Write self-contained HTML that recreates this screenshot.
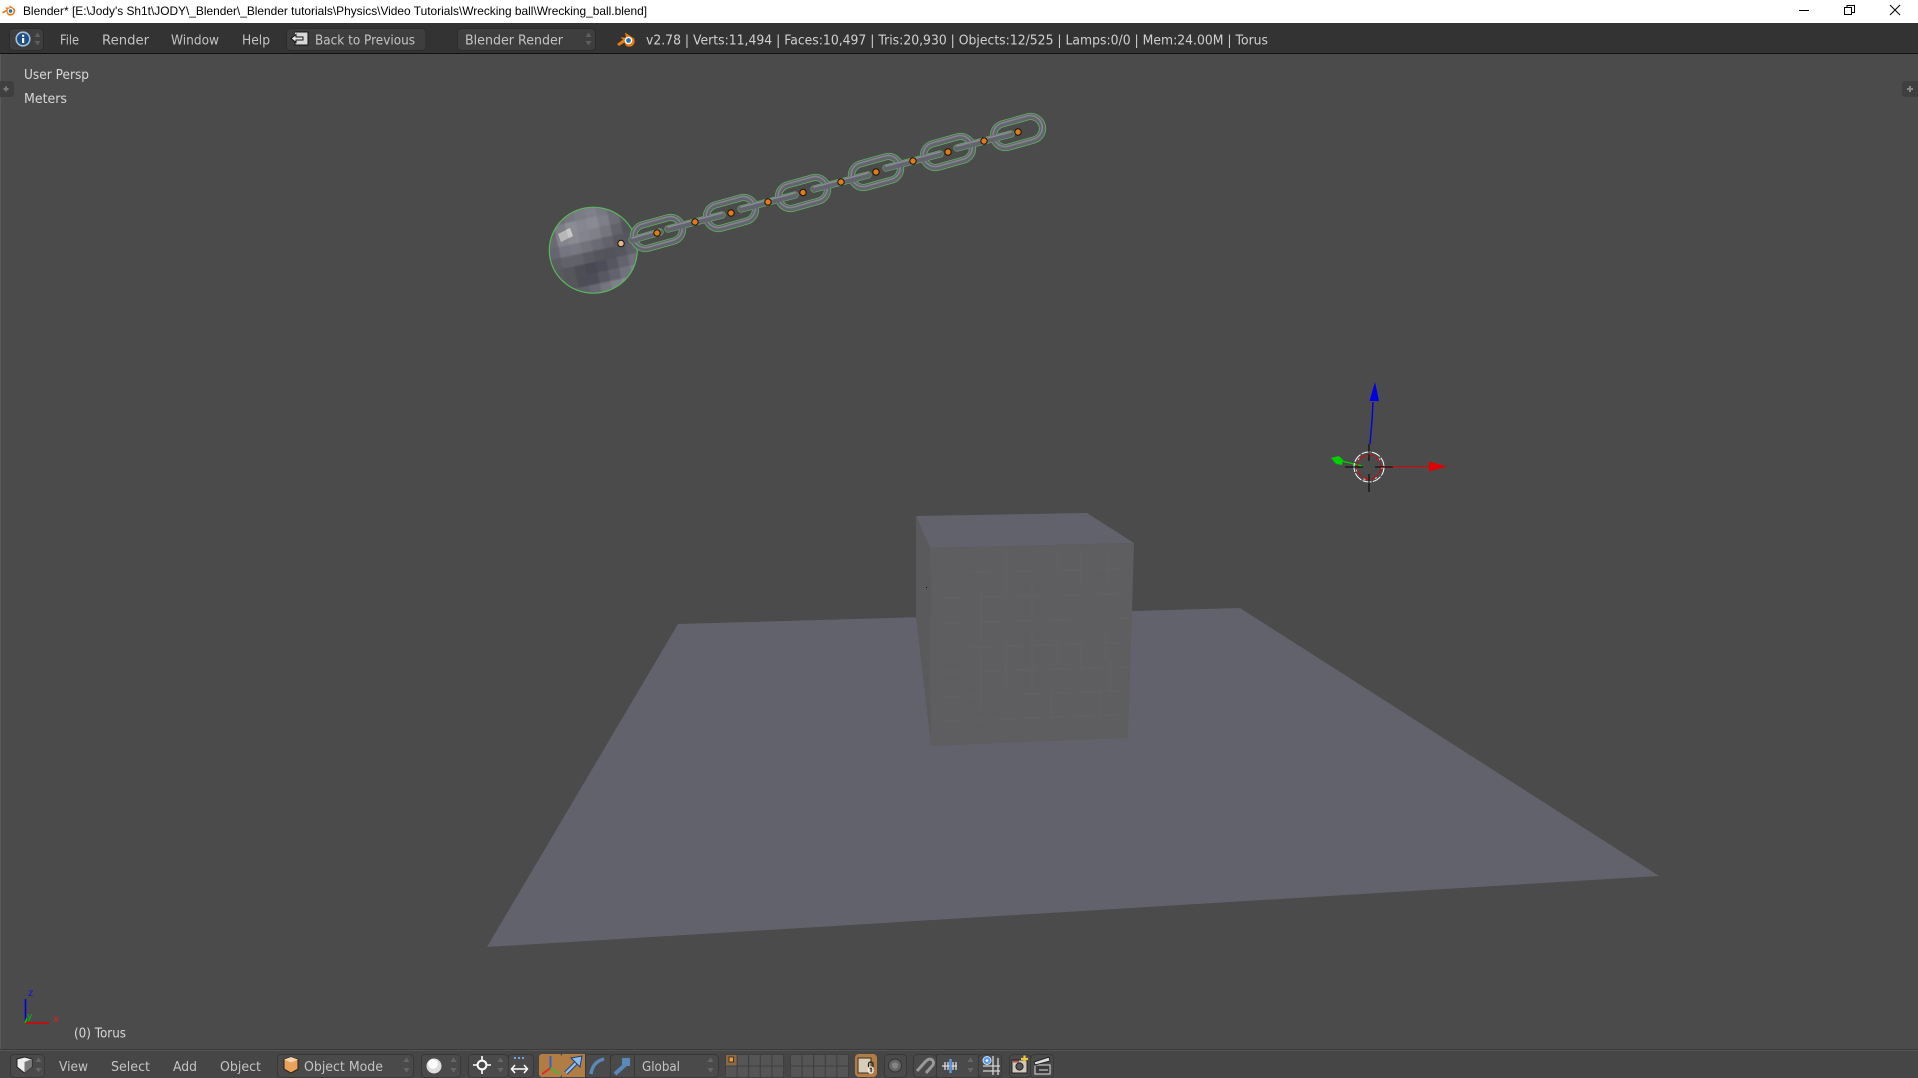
<!DOCTYPE html>
<html><head><meta charset="utf-8"><title>Blender</title>
<style>
html,body{margin:0;padding:0;background:#4b4b4b;overflow:hidden}
svg{display:block}
.u{font-family:"DejaVu Sans",sans-serif;font-size:13px;fill:#c4c4c4}
.v{font-family:"DejaVu Sans",sans-serif;font-size:13px;fill:#d8d8d8}
</style></head><body>
<svg xmlns="http://www.w3.org/2000/svg" width="1918" height="1078" viewBox="0 0 1918 1078">
<defs>
<clipPath id="ballc"><ellipse cx="593.3" cy="250.2" rx="44" ry="43"/></clipPath>
<filter id="soft" x="-10%" y="-10%" width="120%" height="120%"><feGaussianBlur stdDeviation="0.7"/></filter>
</defs>
<!-- viewport -->
<rect width="1918" height="1078" fill="#4b4b4b"/>
<rect x="0" y="54" width="1" height="996" fill="#5a5a5a"/>
<!-- plane -->
<polygon points="487,947 678,624 1240,608 1659,876" fill="#62626c"/>
<!-- cube -->
<polygon points="916,516 1087,513 1134,543 930,548" fill="#62626c"/>
<polygon points="930,548 1134,543 1132,610 1128,738 931,746" fill="#5e5e60"/>
<polygon points="916,516 930,548 931,746 916,617" fill="#5a5a5c"/>
<g stroke="#6a6a70" stroke-width="1" fill="none" opacity=".28">
<path d="M971,572h20M1014,571h22M1060,570h20M1100,569h20M941,598h20M981,597h20M1018,596h22M1060,595h20M1098,594h20M1118,618h14M943,623h20M980,622h20M1015,621h20M1050,620h20M970,647h22M1002,646h20M1034,645h20M1066,644h20M1100,643h20M924,672h10M940,672h20M985,671h16M1016,670h20M1050,669h20M1082,668h20M1120,667h14M943,697h20M968,696h20M1020,694h20M1050,693h20M1080,692h20M1100,691h20M943,721h20M970,720h20M995,719h20M1020,718h20M1046,717h20M1074,716h20M1098,715h20"/>
<path d="M1006,548v50M1032,578v40M1058,550v30M1081,552v30M1108,553v30M981,590v50M1032,630v60M1058,640v30M1081,640v30M1106,630v30M981,650v60M1006,640v50M1051,690v30M1100,690v30M1110,660v40"/>
</g>
<rect x="926" y="587" width="1" height="1" fill="#000"/>

<!-- ball -->
<g clip-path="url(#ballc)"><g transform="rotate(-12 593 251)"><g filter="url(#soft)">
<rect x="535" y="193" width="116" height="116" fill="#606068"/>
<rect x="549" y="207" width="11" height="11" fill="#64646c"/><rect x="560" y="207" width="11" height="11" fill="#6c6c74"/><rect x="571" y="207" width="11" height="11" fill="#74747e"/><rect x="582" y="207" width="11" height="11" fill="#7c7c86"/><rect x="593" y="207" width="11" height="11" fill="#80808a"/><rect x="604" y="207" width="11" height="11" fill="#787882"/><rect x="615" y="207" width="11" height="11" fill="#6a6a74"/><rect x="626" y="207" width="11" height="11" fill="#5e5e66"/>
<rect x="549" y="218" width="11" height="11" fill="#68686f"/><rect x="560" y="218" width="11" height="11" fill="#7e7e86"/><rect x="571" y="218" width="11" height="11" fill="#8c8c94"/><rect x="582" y="218" width="11" height="11" fill="#868690"/><rect x="593" y="218" width="11" height="11" fill="#8a8a94"/><rect x="604" y="218" width="11" height="11" fill="#7e7e88"/><rect x="615" y="218" width="11" height="11" fill="#6c6c76"/><rect x="626" y="218" width="11" height="11" fill="#585862"/>
<rect x="549" y="229" width="11" height="11" fill="#6a6a72"/><rect x="560" y="229" width="11" height="11" fill="#84848c"/><rect x="571" y="229" width="11" height="11" fill="#8a8a92"/><rect x="582" y="229" width="11" height="11" fill="#84848e"/><rect x="593" y="229" width="11" height="11" fill="#80808a"/><rect x="604" y="229" width="11" height="11" fill="#74747e"/><rect x="615" y="229" width="11" height="11" fill="#62626c"/><rect x="626" y="229" width="11" height="11" fill="#52525a"/>
<rect x="549" y="240" width="11" height="11" fill="#666670"/><rect x="560" y="240" width="11" height="11" fill="#767680"/><rect x="571" y="240" width="11" height="11" fill="#787882"/><rect x="582" y="240" width="11" height="11" fill="#72727c"/><rect x="593" y="240" width="11" height="11" fill="#6a6a74"/><rect x="604" y="240" width="11" height="11" fill="#62626c"/><rect x="615" y="240" width="11" height="11" fill="#585862"/><rect x="626" y="240" width="11" height="11" fill="#56565e"/>
<rect x="549" y="251" width="11" height="11" fill="#5c5c64"/><rect x="560" y="251" width="11" height="11" fill="#62626a"/><rect x="571" y="251" width="11" height="11" fill="#62626a"/><rect x="582" y="251" width="11" height="11" fill="#5a5a62"/><rect x="593" y="251" width="11" height="11" fill="#54545c"/><rect x="604" y="251" width="11" height="11" fill="#52525c"/><rect x="615" y="251" width="11" height="11" fill="#565660"/><rect x="626" y="251" width="11" height="11" fill="#5e5e68"/>
<rect x="549" y="262" width="11" height="11" fill="#58585f"/><rect x="560" y="262" width="11" height="11" fill="#54545b"/><rect x="571" y="262" width="11" height="11" fill="#4e4e54"/><rect x="582" y="262" width="11" height="11" fill="#4a4a52"/><rect x="593" y="262" width="11" height="11" fill="#4e4e58"/><rect x="604" y="262" width="11" height="11" fill="#565660"/><rect x="615" y="262" width="11" height="11" fill="#64646e"/><rect x="626" y="262" width="11" height="11" fill="#70707c"/>
<rect x="549" y="273" width="11" height="11" fill="#5a5a64"/><rect x="560" y="273" width="11" height="11" fill="#54545a"/><rect x="571" y="273" width="11" height="11" fill="#4e4e56"/><rect x="582" y="273" width="11" height="11" fill="#4e4e58"/><rect x="593" y="273" width="11" height="11" fill="#585862"/><rect x="604" y="273" width="11" height="11" fill="#646470"/><rect x="615" y="273" width="11" height="11" fill="#72727e"/><rect x="626" y="273" width="11" height="11" fill="#7e7e8c"/>
<rect x="549" y="284" width="11" height="11" fill="#66666e"/><rect x="560" y="284" width="11" height="11" fill="#62626a"/><rect x="571" y="284" width="11" height="11" fill="#60606a"/><rect x="582" y="284" width="11" height="11" fill="#686874"/><rect x="593" y="284" width="11" height="11" fill="#74747f"/><rect x="604" y="284" width="11" height="11" fill="#80808d"/><rect x="615" y="284" width="11" height="11" fill="#8a8a98"/><rect x="626" y="284" width="11" height="11" fill="#8a8a98"/>
</g></g>
<polygon points="558,234 570,228 573,236 561,242" fill="#b8b8b8"/>
<polygon points="566,230 570,228 573,236 569,238" fill="#c8c8c8"/>
</g>
<ellipse cx="593.3" cy="250.2" rx="44" ry="43" fill="none" stroke="#58b858" stroke-width="1.2"/>

<!-- chain: outline layer -->
<g fill="none" stroke="#5cb45c" stroke-width="7.2" stroke-linecap="round">
<rect x="633" y="221" width="50" height="24" rx="12" transform="rotate(-15.7 658 233)"/>
<rect x="706" y="201" width="50" height="24" rx="12" transform="rotate(-15.7 731 213)"/>
<rect x="778" y="181" width="50" height="24" rx="12" transform="rotate(-15.7 803 193)"/>
<rect x="851" y="160" width="50" height="24" rx="12" transform="rotate(-15.7 876 172)"/>
<rect x="923" y="140" width="50" height="24" rx="12" transform="rotate(-15.7 948 152)"/>
<rect x="993" y="120" width="50" height="24" rx="12" transform="rotate(-15.7 1018 132)"/>
<path d="M632,240L660,232M668,229L722,215M741,209L795,195M814,189L868,175M886,168L940,154M957,148L1011,134"/>
</g>
<!-- chain: body -->
<g fill="none" stroke="#64646e" stroke-width="5.6" stroke-linecap="round">
<rect x="633" y="221" width="50" height="24" rx="12" transform="rotate(-15.7 658 233)"/>
<rect x="706" y="201" width="50" height="24" rx="12" transform="rotate(-15.7 731 213)"/>
<rect x="778" y="181" width="50" height="24" rx="12" transform="rotate(-15.7 803 193)"/>
<rect x="851" y="160" width="50" height="24" rx="12" transform="rotate(-15.7 876 172)"/>
<rect x="923" y="140" width="50" height="24" rx="12" transform="rotate(-15.7 948 152)"/>
<rect x="993" y="120" width="50" height="24" rx="12" transform="rotate(-15.7 1018 132)"/>
</g>
<g fill="none" stroke="#84848e" stroke-width="1.6" stroke-linecap="round">
<rect x="633" y="220" width="50" height="24" rx="12" transform="rotate(-15.7 658 233)"/>
<rect x="706" y="200" width="50" height="24" rx="12" transform="rotate(-15.7 731 213)"/>
<rect x="778" y="180" width="50" height="24" rx="12" transform="rotate(-15.7 803 193)"/>
<rect x="851" y="159" width="50" height="24" rx="12" transform="rotate(-15.7 876 172)"/>
<rect x="923" y="139" width="50" height="24" rx="12" transform="rotate(-15.7 948 152)"/>
<rect x="993" y="119" width="50" height="24" rx="12" transform="rotate(-15.7 1018 132)"/>
</g>
<g fill="none" stroke="#646470" stroke-width="6" stroke-linecap="round">
<path d="M632,240L660,232M668,229L722,215M741,209L795,195M814,189L868,175M886,168L940,154M957,148L1011,134"/>
</g>
<g fill="none" stroke="#8a8a94" stroke-width="1.6" stroke-linecap="round">
<path d="M632,238L660,230M668,227L722,213M741,207L795,193M814,187L868,173M886,166L940,152M957,146L1011,132"/>
</g>
<!-- origins -->
<g fill="#e07a1a" stroke="#1a1208" stroke-width="1">
<circle cx="657" cy="233" r="3.2"/><circle cx="695" cy="222" r="3.2"/><circle cx="731" cy="213" r="3.2"/><circle cx="768" cy="202" r="3.2"/><circle cx="803" cy="192.5" r="3.2"/><circle cx="841" cy="182" r="3.2"/><circle cx="876" cy="172" r="3.2"/><circle cx="913" cy="161" r="3.2"/><circle cx="948" cy="152" r="3.2"/><circle cx="984" cy="141" r="3.2"/><circle cx="1018" cy="132" r="3.2"/>
</g>
<circle cx="621" cy="243.5" r="3.2" fill="#e6b78c" stroke="#1a1208" stroke-width="1"/>

<!-- 3D cursor & manipulator -->
<g fill="none">
<path d="M1370,444L1372,420L1373,402" stroke="#0000e0" stroke-width="1.4"/>
<path d="M1362,466L1342,461" stroke="#00d000" stroke-width="1.4"/>
<path d="M1383,466.5H1430" stroke="#e00000" stroke-width="1"/>
</g>
<polygon points="1375,382 1369.5,401 1379,401" fill="#0000e0"/>
<polygon points="1331,458 1339,456 1343,460 1342,465 1336,464" fill="#00d000"/>
<polygon points="1429,461.5 1447,466.5 1429,471.5" fill="#e00000"/>
<circle cx="1369" cy="467" r="15" fill="none" stroke="#fff" stroke-width="1" stroke-dasharray="9 1.5"/>
<circle cx="1369" cy="467" r="12" fill="none" stroke="#e00000" stroke-width="1" stroke-dasharray="7 2"/>
<circle cx="1369" cy="467" r="13" fill="none" stroke="#fff" stroke-width="1" stroke-dasharray="2 10" opacity=".7"/>
<path d="M1345,467H1363M1375,467H1393M1369,444V461M1369,474V492" stroke="#000" stroke-width="1" fill="none" shape-rendering="crispEdges"/>

<!-- viewport text -->
<text class="v" x="24" y="79" textLength="65" lengthAdjust="spacingAndGlyphs">User Persp</text>
<text class="v" x="24" y="103" textLength="43" lengthAdjust="spacingAndGlyphs">Meters</text>
<text class="v" x="74" y="1037.5" textLength="52" lengthAdjust="spacingAndGlyphs">(0) Torus</text>
<!-- corner axes -->
<path d="M25.5,1023V999" stroke="#0000e0" stroke-width="1.6" fill="none"/>
<path d="M25,1023H49" stroke="#e00000" stroke-width="1.6" fill="none"/>
<path d="M25,1023L27,1018" stroke="#00c000" stroke-width="1.6" fill="none"/>
<text x="28" y="996" font-family="DejaVu Sans,sans-serif" font-size="10" fill="#1010e0">z</text>
<text x="27" y="1019" font-family="DejaVu Sans,sans-serif" font-size="9" fill="#00c000">y</text>
<text x="53" y="1022" font-family="DejaVu Sans,sans-serif" font-size="10" fill="#e02020">x</text>
<!-- tool region plus -->
<rect x="-6" y="81" width="20" height="16" rx="3" fill="#3f3f3f"/>
<path d="M6,86.5V91.5M3.5,89H8.5" stroke="#777" stroke-width="2" fill="none"/>
<rect x="1902" y="81" width="24" height="16" rx="3" fill="#3f3f3f"/>
<path d="M1910,86V92M1907,89H1913" stroke="#888" stroke-width="2" fill="none"/>

<!-- title bar -->
<rect width="1918" height="23" fill="#fff"/>
<g>
<path d="M2,12L7,9.5L5,7.5L10,7.5L9,5L15,9C16,13 13,16.5 9,15.5C7,15 6.8,12.5 6.5,11.5L3,13.5Z" fill="#e87d0d"/>
<circle cx="10.5" cy="11" r="3" fill="#fff"/><circle cx="10.5" cy="11" r="1.8" fill="#2a6eb8"/>
</g>
<text x="23" y="15" font-family="Liberation Sans,sans-serif" font-size="12" fill="#000" textLength="624" lengthAdjust="spacingAndGlyphs">Blender* [E:\Jody's Sh1t\JODY\_Blender\_Blender tutorials\Physics\Video Tutorials\Wrecking ball\Wrecking_ball.blend]</text>
<g fill="none" stroke="#000" stroke-width="1" shape-rendering="crispEdges">
<path d="M1799,10.5H1809"/>
<rect x="1844.5" y="7.5" width="7" height="7"/>
<path d="M1847,7.5V5.5H1854.5V12.5H1852"/>
</g>
<path d="M1890,5L1900,15M1900,5L1890,15" stroke="#000" stroke-width="1" fill="none"/>

<!-- top header -->
<rect y="23" width="1918" height="30" fill="#333"/>
<rect y="53" width="1918" height="1" fill="#111"/>
<rect x="9.5" y="28.5" width="34" height="22" rx="4" fill="#3e3e3e" stroke="#2c2c2c"/>
<circle cx="23" cy="39" r="7.6" fill="#a4bedc"/><circle cx="23" cy="39" r="6" fill="#1f4e86"/>
<rect x="22" y="38" width="2.2" height="5" fill="#fff"/><rect x="22" y="34.8" width="2.2" height="2" fill="#fff"/>
<path d="M34.5,37L37.5,32.5L40.5,37ZM34.5,41L37.5,45.5L40.5,41Z" fill="#5e5e5e"/>
<text class="u" x="60" y="44.5" textLength="19" lengthAdjust="spacingAndGlyphs">File</text>
<text class="u" x="102" y="44.5" textLength="47" lengthAdjust="spacingAndGlyphs">Render</text>
<text class="u" x="171" y="44.5" textLength="48" lengthAdjust="spacingAndGlyphs">Window</text>
<text class="u" x="242" y="44.5" textLength="28" lengthAdjust="spacingAndGlyphs">Help</text>
<rect x="286.5" y="28.5" width="139.5" height="22" rx="4" fill="#3e3e3e" stroke="#2c2c2c"/>
<path d="M295,32H308V45H295V42" fill="#d8d8d8" stroke="#111" stroke-width="1"/>
<path d="M291,38.5L296,34.5V37H303V40H296V42.5Z" fill="#e8e8e8" stroke="#111" stroke-width="1"/>
<text class="u" x="315" y="44.5" textLength="100" lengthAdjust="spacingAndGlyphs">Back to Previous</text>
<rect x="457.5" y="28.5" width="138" height="22" rx="4" fill="#3e3e3e" stroke="#2c2c2c"/>
<text class="u" x="465" y="44.5" textLength="98" lengthAdjust="spacingAndGlyphs">Blender Render</text>
<path d="M585.5,37L588.5,32.5L591.5,37ZM585.5,41L588.5,45.5L591.5,41Z" fill="#5e5e5e"/>
<g>
<path d="M617,44L623,39.5L620.5,37.5L626,37.5L625,32.5L634,38.5C636,43 633,47.5 627.5,46.5C625.5,46 625,43.5 624.5,42.5L619,46Z" fill="#e87d0d"/>
<circle cx="628.5" cy="40.5" r="3.8" fill="#fff"/><circle cx="628.5" cy="40.5" r="2.4" fill="#2a6eb8"/>
</g>
<text x="646" y="44.5" font-family="DejaVu Sans,sans-serif" font-size="13" fill="#d0d0d0" textLength="622" lengthAdjust="spacingAndGlyphs">v2.78 | Verts:11,494 | Faces:10,497 | Tris:20,930 | Objects:12/525 | Lamps:0/0 | Mem:24.00M | Torus</text>

<!-- bottom header -->
<rect y="1050" width="1918" height="28" fill="#464646"/>
<rect y="1049" width="1918" height="1" fill="#3a3a3a"/>
<rect y="1050" width="1918" height="1" fill="#555"/>
<g fill="#4a4a4a" stroke="#383838">
<rect x="10.5" y="1054.5" width="34" height="23" rx="4"/>
<rect x="277.5" y="1054.5" width="136" height="23" rx="4"/>
<rect x="421.5" y="1054.5" width="39" height="23" rx="4"/>
<rect x="468.5" y="1054.5" width="40" height="23" rx="4"/>
<rect x="508.5" y="1054.5" width="25" height="23" rx="4"/>
<rect x="610.5" y="1054.5" width="108" height="23" rx="4"/>
<rect x="585.5" y="1054.5" width="25" height="23"/>
<rect x="884.5" y="1054.5" width="22" height="23" rx="4"/>
<rect x="913.5" y="1054.5" width="23" height="23" rx="4"/>
<rect x="936.5" y="1054.5" width="42" height="23"/>
<rect x="978.5" y="1054.5" width="23" height="23" rx="4"/>
<rect x="1009.5" y="1054.5" width="21" height="23" rx="4"/>
<rect x="1030.5" y="1054.5" width="23" height="23" rx="4"/>
</g>
<rect x="634" y="1055" width="1" height="22" fill="#383838"/>
<!-- shield cube -->
<path d="M17,1059L24.5,1057L32,1059V1067L24.5,1073L17,1067Z" fill="#eee" stroke="#222"/>
<path d="M24.5,1062L32,1059V1067L24.5,1073Z" fill="#777"/>
<path d="M35.5,1062L38.5,1057.5L41.5,1062ZM35.5,1068L38.5,1072.5L41.5,1068Z" fill="#666"/>
<text class="u" x="59" y="1071" textLength="29" lengthAdjust="spacingAndGlyphs">View</text>
<text class="u" x="111" y="1071" textLength="39" lengthAdjust="spacingAndGlyphs">Select</text>
<text class="u" x="173" y="1071" textLength="24" lengthAdjust="spacingAndGlyphs">Add</text>
<text class="u" x="220" y="1071" textLength="41" lengthAdjust="spacingAndGlyphs">Object</text>
<!-- object mode cube -->
<path d="M284,1059.5L291,1057L298,1059.5V1069L291,1073L284,1069Z" fill="#e8a25c" stroke="#2a1c0c"/>
<path d="M284,1059.5L291,1057L298,1059.5L291,1062.5Z" fill="#f4d4ac"/>
<text class="u" x="304" y="1071" textLength="79" lengthAdjust="spacingAndGlyphs">Object Mode</text>
<path d="M403.5,1062L406.5,1057.5L409.5,1062ZM403.5,1068L406.5,1072.5L409.5,1068Z" fill="#666"/>
<!-- sphere -->
<circle cx="434" cy="1066" r="7.5" fill="#ddd"/><circle cx="433" cy="1064" r="4.8" fill="#fff"/>
<path d="M450.5,1062L453.5,1057.5L456.5,1062ZM450.5,1068L453.5,1072.5L456.5,1068Z" fill="#666"/>
<!-- pivot -->
<circle cx="482" cy="1065" r="4.4" fill="none" stroke="#fff" stroke-width="2"/>
<path d="M482,1056V1060M482,1070V1074M473,1065H477M487,1065H491" stroke="#fff" stroke-width="1.6" fill="none"/>
<path d="M497.5,1062L500.5,1057.5L503.5,1062ZM497.5,1068L500.5,1072.5L503.5,1068Z" fill="#666"/>
<path d="M514,1058h2M518,1058h2M522,1058h2" stroke="#6fa4e0" stroke-width="2" fill="none"/>
<path d="M512,1069H527M515,1065L511.5,1069L515,1073M524,1065L527.5,1069L524,1073" stroke="#fff" stroke-width="1.5" fill="none"/>
<!-- manipulator -->
<rect x="539" y="1054" width="23" height="23" rx="3" fill="#b27d45"/>
<rect x="562" y="1054" width="23" height="23" fill="#b27d45"/>
<path d="M550.5,1068V1056" stroke="#3260c8" stroke-width="2" fill="none"/>
<path d="M550.5,1068L542,1074" stroke="#d83030" stroke-width="2" fill="none"/>
<path d="M550.5,1068L559,1074" stroke="#50b030" stroke-width="2" fill="none"/>
<path d="M566,1073L578,1061" stroke="#1c3f6e" stroke-width="4.4" fill="none"/>
<path d="M566,1073L578,1061" stroke="#8cbcf0" stroke-width="2.4" fill="none"/>
<polygon points="571,1058 582,1056 580,1067" fill="#8cbcf0" stroke="#1c3f6e"/>
<path d="M591,1074C592,1066 596,1061 604,1059" stroke="#5a88b8" stroke-width="3.4" fill="none"/>
<path d="M615,1074L626,1064" stroke="#5a88b8" stroke-width="4" fill="none"/>
<rect x="622" y="1058" width="8" height="8" fill="#5a88b8"/>
<text class="u" x="642" y="1071" textLength="38" lengthAdjust="spacingAndGlyphs">Global</text>
<path d="M707.5,1062L710.5,1057.5L713.5,1062ZM707.5,1068L710.5,1072.5L713.5,1068Z" fill="#666"/>
<!-- layers -->
<g fill="#555" stroke="#3f3f3f">
<rect x="725.5" y="1054.5" width="11.6" height="11.5"/><rect x="737.1" y="1054.5" width="11.6" height="11.5"/><rect x="748.7" y="1054.5" width="11.6" height="11.5"/><rect x="760.3" y="1054.5" width="11.6" height="11.5"/><rect x="771.9" y="1054.5" width="11.6" height="11.5"/>
<rect x="725.5" y="1066" width="11.6" height="11.5"/><rect x="737.1" y="1066" width="11.6" height="11.5"/><rect x="748.7" y="1066" width="11.6" height="11.5"/><rect x="760.3" y="1066" width="11.6" height="11.5"/><rect x="771.9" y="1066" width="11.6" height="11.5"/>
<rect x="790.5" y="1054.5" width="11.6" height="11.5"/><rect x="802.1" y="1054.5" width="11.6" height="11.5"/><rect x="813.7" y="1054.5" width="11.6" height="11.5"/><rect x="825.3" y="1054.5" width="11.6" height="11.5"/><rect x="836.9" y="1054.5" width="11.6" height="11.5"/>
<rect x="790.5" y="1066" width="11.6" height="11.5"/><rect x="802.1" y="1066" width="11.6" height="11.5"/><rect x="813.7" y="1066" width="11.6" height="11.5"/><rect x="825.3" y="1066" width="11.6" height="11.5"/><rect x="836.9" y="1066" width="11.6" height="11.5"/>
</g>
<rect x="725.5" y="1054.5" width="11.6" height="11.5" fill="#8a6a44" stroke="#3f3f3f"/>
<rect x="729" y="1057" width="4.5" height="5" fill="#f09a3c" stroke="#222" stroke-width=".8"/>
<!-- lock -->
<rect x="855" y="1054" width="22" height="23" rx="4" fill="#b27d45"/>
<rect x="858" y="1058" width="13" height="15" fill="#d8cdb8" stroke="#3a3020"/>
<rect x="868.5" y="1062" width="4.5" height="6" rx="2" fill="none" stroke="#222" stroke-width="1.3"/>
<rect x="868.5" y="1067" width="4.5" height="6" rx="2" fill="none" stroke="#eee" stroke-width="1.3"/>
<!-- occlude dot -->
<circle cx="895" cy="1065.5" r="6.5" fill="#666" stroke="#333"/><circle cx="895" cy="1065.5" r="3.2" fill="#858585"/>
<!-- magnet -->
<path d="M917,1071L926,1061C930,1057 935,1060 933,1065L926,1073" fill="none" stroke="#999" stroke-width="3"/>
<!-- snap element -->
<path d="M942,1066H957M945,1062V1070M948,1062V1070M953,1062V1070M956,1062V1070" stroke="#ddd" stroke-width="1.3" fill="none"/>
<path d="M950.5,1059V1073" stroke="#5a9ae8" stroke-width="2.4" fill="none"/>
<path d="M967.5,1062L970.5,1057.5L973.5,1062ZM967.5,1068L970.5,1072.5L973.5,1068Z" fill="#666"/>
<!-- snap grid -->
<circle cx="987" cy="1060.5" r="4" fill="#5a9ae8" stroke="#cfe0f4"/><circle cx="987" cy="1060.5" r="1.3" fill="#fff"/>
<path d="M993,1056V1075M998,1058V1075M983,1066H1000M983,1071H1000" stroke="#d4d4d4" stroke-width="1.3" fill="none"/>
<!-- render cam -->
<rect x="1012" y="1060" width="15" height="13" fill="#d0c8bc" stroke="#222"/>
<circle cx="1019.5" cy="1066.5" r="3.6" fill="#555" stroke="#222"/>
<rect x="1013" y="1060.5" width="6" height="2" fill="#b05050"/>
<path d="M1024.5,1055.5V1062.5M1021,1059H1028" stroke="#e8c840" stroke-width="2.2" fill="none"/>
<!-- clapper -->
<rect x="1035" y="1065" width="15" height="9" fill="#3a3a3a" stroke="#ddd"/>
<path d="M1034,1062L1049,1057L1050,1061L1035,1065Z" fill="#ddd" stroke="#222"/>
<path d="M1039,1070H1048" stroke="#ddd" fill="none"/>
</svg>
</body></html>
